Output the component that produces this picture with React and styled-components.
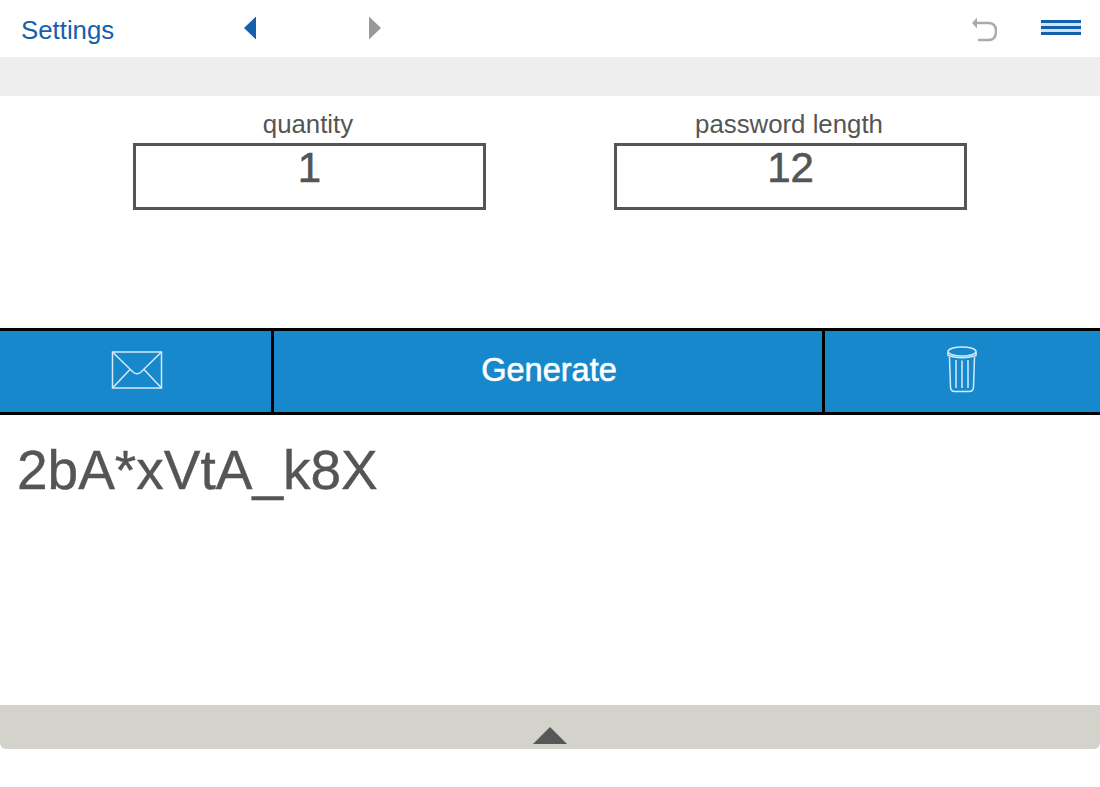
import React from 'react';
import styled, { createGlobalStyle } from 'styled-components';

const GlobalStyle = createGlobalStyle`
  html, body {
    margin: 0;
    padding: 0;
    background: #fff;
  }
  * {
    box-sizing: border-box;
  }
`;

const App = () => {
  return (
    <Page>
      <GlobalStyle />
      <Header>
        <Title>Settings</Title>
        <Arrows>
          <svg width="14" height="24" viewBox="0 0 14 24">
            <polygon points="13,0.5 13,23.500 1,12" fill="#1560ad" />
          </svg>
          <svg width="14" height="24" viewBox="0 0 14 24">
            <polygon points="1,0.5 1,23.500 13,12" fill="#999" />
          </svg>
        </Arrows>
        <HeaderRight>
          <svg width="26" height="26" viewBox="0 0 26 26" fill="none">
            <path d="M6 6 H18 Q25 6.500 25 14 Q25 23 18 23 H7" stroke="#aaa" strokeWidth="2.4" />
            <polygon points="1,6 6,0.5 6,11.500" fill="#aaa" />
          </svg>
          <Hamburger>
            <span />
            <span />
            <span />
          </Hamburger>
        </HeaderRight>
      </Header>
      <GrayBar />
      <Fields>
        <Field>
          <Label>quantity</Label>
          <ValueBox>1</ValueBox>
        </Field>
        <Field>
          <Label>password length</Label>
          <ValueBox>12</ValueBox>
        </Field>
      </Fields>
      <ActionBar>
        <ActionCell $width={271}>
          <MailIcon width="52" height="38" viewBox="0 0 52 38" fill="none" stroke="#d4eafa" strokeWidth="1.5">
            <rect x="1.500" y="1" width="49" height="36" />
            <path d="M1.500 1 L22 21 Q26 24.500 30 21 L50.500 1" />
            <path d="M1.500 37 L19 18.500 M50.500 37 L33 18.500" />
          </MailIcon>
        </ActionCell>
        <Divider />
        <ActionCell $grow>
          <GenerateLabel>Generate</GenerateLabel>
        </ActionCell>
        <Divider />
        <ActionCell $width={275}>
          <TrashIcon width="32" height="48" viewBox="0 0 32 48" fill="none" stroke="#d4eafa" strokeWidth="1.5">
            <ellipse cx="16" cy="6.500" rx="14" ry="4.500" />
            <path d="M2 7 V10.500 Q16 15 30 10.500 V7" />
            <path d="M3.500 12 L4.500 42 Q4.500 46.500 9 46.500 H23 Q27.500 46.500 27.500 42 L28.500 12" />
            <path d="M10 15 V43 M16 15.500 V43 M22 15 V43" />
          </TrashIcon>
        </ActionCell>
      </ActionBar>
      <Output>2bA*xVtA_k8X</Output>
      <Footer>
        <svg width="34" height="17" viewBox="0 0 34 17">
          <polygon points="17,0 34,17 0,17" fill="#575757" />
        </svg>
      </Footer>
    </Page>
  );
};

const Page = styled.div`
  width: 1100px;
  height: 787px;
  display: flex;
  flex-direction: column;
  font-family: 'Liberation Sans', Arial, sans-serif;
  color: #555;
  background: #fff;
  overflow: hidden;
`;

const Header = styled.header`
  height: 57px;
  display: flex;
  align-items: center;
  padding: 2px 19px 0 21px;
`;

const Title = styled.div`
  width: 222px;
  margin-top: 2px;
  font-size: 25.8px;
  color: #1560ad;
`;

const Arrows = styled.div`
  display: flex;
  gap: 111px;
  margin-top: -4px;
`;

const HeaderRight = styled.div`
  margin-left: auto;
  display: flex;
  align-items: center;
  gap: 44px;
`;

const Hamburger = styled.div`
  width: 40px;
  display: flex;
  flex-direction: column;
  gap: 3px;
  margin-top: -4px;
  background: #d5e3f1;
  span {
    height: 3px;
    background: #1560ad;
  }
`;

const GrayBar = styled.div`
  height: 39px;
  background: #eee;
`;

const Fields = styled.section`
  height: 232px;
  display: flex;
  justify-content: center;
  gap: 128px;
  padding-top: 13px;
`;

const Field = styled.div`
  width: 353px;
  display: flex;
  flex-direction: column;
  align-items: center;
`;

const Label = styled.div`
  font-size: 25.8px;
  line-height: 30px;
  height: 34px;
  margin-right: 3px;
`;

const ValueBox = styled.div`
  width: 100%;
  height: 67px;
  border: 3px solid #555;
  text-align: center;
  font-size: 42px;
  line-height: 44px;
  -webkit-text-stroke: 0.6px #555;
`;

const ActionBar = styled.div`
  height: 87px;
  display: flex;
  background: #1788cc;
  border-top: 3px solid #000;
  border-bottom: 3px solid #000;
`;

const ActionCell = styled.div`
  ${(p) => (p.$grow ? 'flex: 1;' : `width: ${p.$width}px;`)}
  display: flex;
  align-items: center;
  justify-content: center;
`;

const GenerateLabel = styled.span`
  margin: 0 0 3px 2px;
  color: #fff;
  font-size: 32.5px;
  -webkit-text-stroke: 0.6px #fff;
`;

const MailIcon = styled.svg`
  margin: -3px 0 0 2px;
`;

const TrashIcon = styled.svg`
  margin: -5px 2px 0 0;
`;

const Divider = styled.div`
  width: 3px;
  background: #000;
`;

const Output = styled.div`
  height: 290px;
  padding: 24px 0 0 17px;
  font-size: 55px;
  line-height: 62px;
  -webkit-text-stroke: 0.4px #555;
`;

const Footer = styled.div`
  height: 44px;
  background: #d3d3cb;
  border-radius: 0 0 6px 6px;
  display: flex;
  justify-content: center;
  align-items: flex-end;
  padding-bottom: 5px;
`;

export default App;
